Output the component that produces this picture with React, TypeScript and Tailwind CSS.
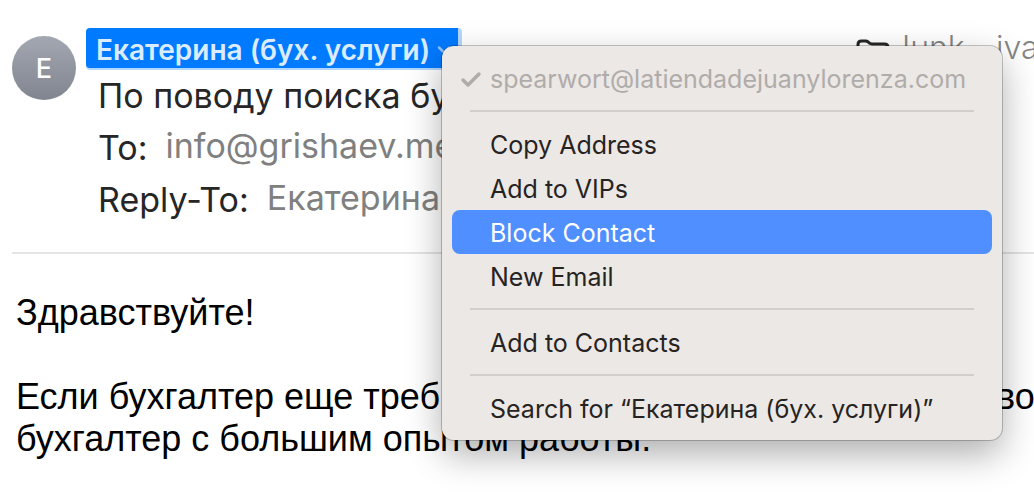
import { Check, ChevronDown } from "lucide-react";

function Separator() {
  return (
    <div role="separator" className="flex h-[22px] items-center px-[18px]">
      <div className="h-0.5 w-full bg-[#d2cecb]" />
    </div>
  );
}

function FolderIcon() {
  return (
    <svg
      viewBox="0 0 34 28"
      className="mt-2.5 mr-0.5 h-7 w-[34px] shrink-0 text-[#262626]"
      fill="none"
      stroke="currentColor"
      strokeWidth="3"
      strokeLinejoin="round"
      aria-hidden="true"
    >
      <path d="M2 22V5.500Q2 2 5.500 2H9.500Q11 2 12.200 3L13.500 4.200Q14.500 5 16 5H28.500Q32 5 32 8.500V22Q32 26 28.500 26H5.500Q2 26 2 22Z" />
    </svg>
  );
}

type ItemProps = { label: string; highlighted?: boolean; checked?: boolean };

function MenuItem({ label, highlighted, checked }: ItemProps) {
  const tone = highlighted
    ? "bg-[#4f8fff] text-white"
    : checked
      ? "text-[#b0acaa]"
      : "text-[#262322]";
  return (
    <button
      type="button"
      role={checked ? "menuitemcheckbox" : "menuitem"}
      aria-checked={checked ? true : undefined}
      disabled={checked}
      className={`flex h-11 w-full items-center rounded-lg pt-1 text-left text-[25px] whitespace-nowrap ${tone}`}
    >
      <span className="flex w-[38px] shrink-0 justify-center">
        {checked && <Check className="size-6" strokeWidth={3.5} />}
      </span>
      {label}
    </button>
  );
}

function ContactMenu() {
  return (
    <div
      role="menu"
      aria-label="Contact"
      className="absolute top-[18px] left-[356px] z-10 w-[560px] rounded-xl bg-[#ece8e5] p-2.5 shadow-[0_0_0_1px_rgba(0,0,0,0.22),0_14px_36px_rgba(0,0,0,0.32)]"
    >
      <MenuItem label="spearwort@latiendadejuanylorenza.com" checked />
      <Separator />
      <MenuItem label="Copy Address" />
      <MenuItem label="Add to VIPs" />
      <MenuItem label="Block Contact" highlighted />
      <MenuItem label="New Email" />
      <Separator />
      <MenuItem label="Add to Contacts" />
      <Separator />
      <MenuItem label="Search for “Екатерина (бух. услуги)”" />
    </div>
  );
}

export default function App() {
  return (
    <main className="min-h-screen overflow-hidden bg-white font-[Inter,'Liberation_Sans',sans-serif]">
      <header className="ml-3 flex gap-2.5 border-b-2 border-[#e4e4e4] pt-7 pb-[26px]">
        <div className="mt-2 flex size-16 shrink-0 items-center justify-center rounded-full bg-linear-to-b from-[#a3a7b2] to-[#81858f] pt-0.5 text-[27px] font-medium text-white">
          Е
        </div>
        <div className="relative min-w-0 flex-1">
          <div className="flex h-[42px] items-start justify-between">
            <button
              type="button"
              aria-haspopup="menu"
              aria-expanded="true"
              className="flex h-10 w-[376px] shrink-0 items-center gap-1 rounded-sm border-r-4 border-[#b3d7ff] bg-[#007aff] pt-1 pl-2.5 text-[28px] font-semibold whitespace-nowrap text-[#dcecff] shadow-[0_2px_0_#b3d7ff]"
            >
              Екатерина (бух. услуги)
              <ChevronDown className="size-5 shrink-0 text-[#8cc3ff]" strokeWidth={3} />
            </button>
            <div className="flex h-10 w-[178px] shrink-0 items-center whitespace-nowrap text-[32px] text-[#858585]">
              <FolderIcon />
              <span className="w-[104px] shrink-0 font-light">Junk</span>
              <span className="font-light">ivan</span>
            </div>
          </div>
          <div className="pl-3 text-[34px] whitespace-nowrap text-[#262626]">
            <h1 className="h-[52px] leading-[52px]">По поводу поиска бу</h1>
            <div className="flex h-[52px] gap-[18px] leading-[52px]">
              <span>To:</span>
              <span className="leading-[48px] text-[#808080]">info@grishaev.me</span>
            </div>
            <div className="flex h-[52px] gap-[18px] leading-[52px]">
              <span>Reply-To:</span>
              <span className="leading-[48px] text-[#808080]">Екатерина</span>
            </div>
          </div>
          <ContactMenu />
        </div>
      </header>
      <article className="pt-[38px] pl-4 font-['Liberation_Sans',Arial,sans-serif] text-[36px] leading-[42px] whitespace-nowrap text-black">
        <p className="mb-[42px]">Здравствуйте!</p>
        <p className="flex justify-between">
          <span>Если бухгалтер еще треб</span>
          <span className="w-[38px] overflow-hidden">вом</span>
        </p>
        <p>бухгалтер с большим опытом работы.</p>
      </article>
    </main>
  );
}
